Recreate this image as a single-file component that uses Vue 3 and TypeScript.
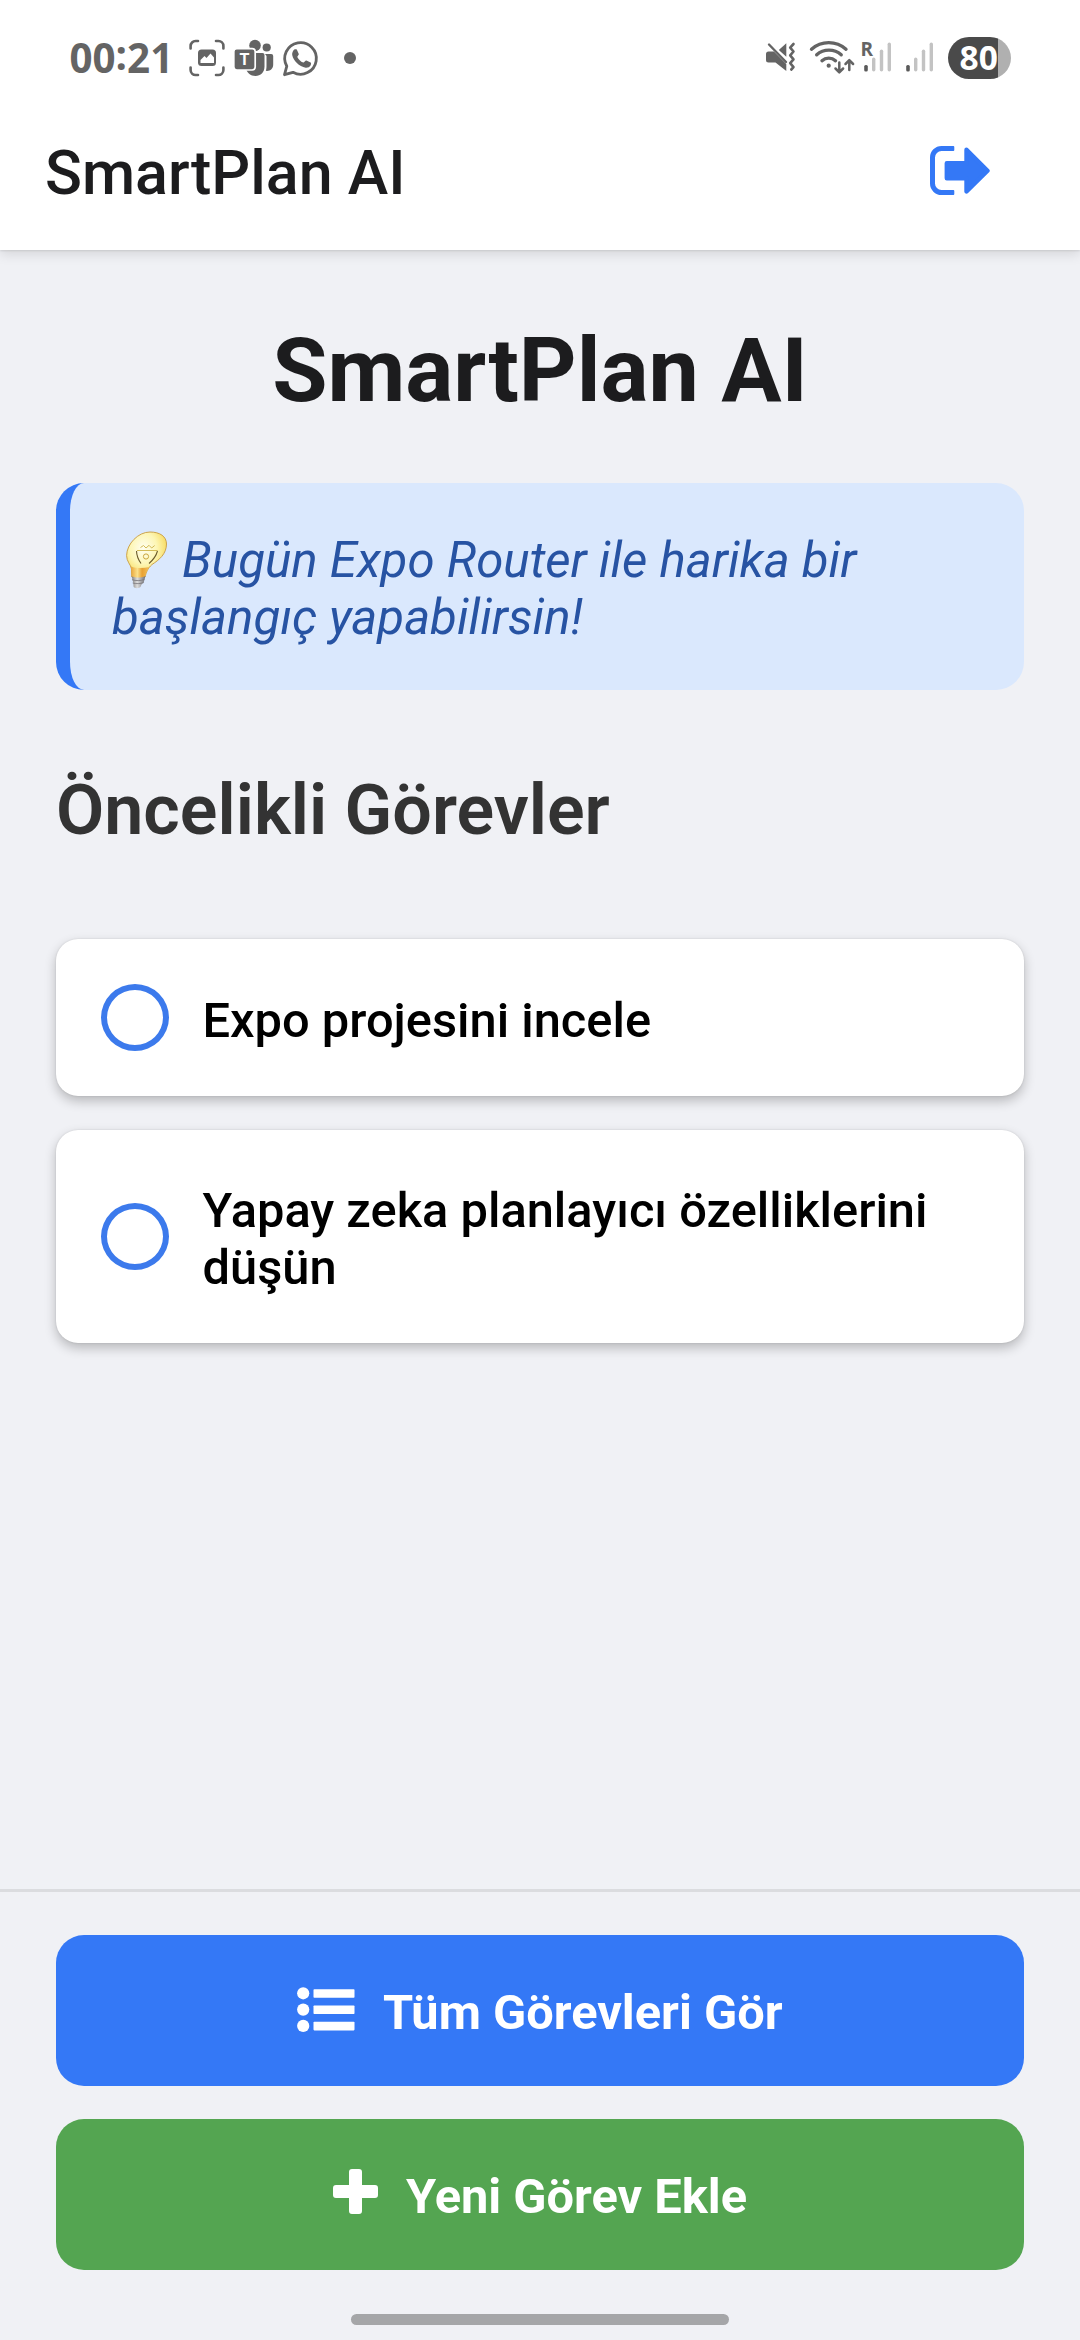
<script setup lang="ts">
import { ref } from 'vue'

interface Task {
  id: number
  title: string
}

const appName = 'SmartPlan AI'
const tasks = ref<Task[]>([
  { id: 1, title: 'Expo projesini incele' },
  { id: 2, title: 'Yapay zeka planlayıcı özelliklerini düşün' },
])
</script>

<template>
  <div class="screen">
    <div class="top">
      <div class="status">
        <span class="clock">00<span class="colon">:</span>21</span>
        <svg class="notif" width="135" height="44" viewBox="0 0 135 44">
          <g fill="none" stroke="#646464" stroke-width="2.6" stroke-linecap="round">
            <path d="M1.6 12.5V10a5 5 0 0 1 5-5H9M27 5h2.400a5 5 0 0 1 5 5v2.500M34.400 31.500V34a5 5 0 0 1-5 5H27M9 39H6.600a5 5 0 0 1-5-5v-2.500" />
          </g>
          <rect x="9" y="13.500" width="18" height="16.500" rx="3.500" fill="#646464" />
          <path d="M11.500 27v-3l4-4 2 2 4-4.500 3.500 4V27z" fill="#fff" />
          <!-- teams -->
          <g fill="#646464">
            <circle cx="66" cy="9.500" r="5.800" />
            <circle cx="77.700" cy="11.500" r="4.100" />
            <path d="M76 18h6.200a2 2 0 0 1 2 2v8.500c0 4-2.700 6.300-6.200 6.500-.8 0-1.200-.2-1.200-.2.700-1.800.700-3.500.700-5.800V20z" />
            <path d="M57 17h16.500a2 2 0 0 1 2 2v11.500c0 5.700-4 9.500-9 9.500s-9-3.500-9.500-8z" />
            <rect x="44.800" y="12.600" width="21.400" height="21.400" rx="3" stroke="#fff" stroke-width="1.700" />
          </g>
          <text x="55.400" y="29.300" text-anchor="middle" class="teams-t">T</text>
          <!-- whatsapp -->
          <path d="M95.500 38.700l2.300-8.500A15.800 15.800 0 1 1 104 36.300z" fill="none" stroke="#646464" stroke-width="2.800" stroke-linejoin="round" />
          <path d="M105.300 13.600c.5-.5 2.100-.7 2.600.1l1.900 4.200c.3.900-1.700 2.400-1.500 3.100 1.200 2.600 3.300 4.500 5.900 5.600.8.300 2.300-2.300 3.200-2l4.200 2c.8.400.5 1.700.1 2.600-.8 1.800-3.300 2.700-5 2.500-6.600-1-12.300-6.800-13.500-12.600-.3-2.200.7-4.200 2.100-5.500z" fill="#646464" />
        </svg>
        <span class="more"></span>
        <svg class="system" width="172" height="44" viewBox="0 0 172 44">
          <!-- muted speaker with vibration -->
          <g fill="#646464">
            <path d="M0 18a2.500 2.500 0 0 1 2.500-2.500H8L20.300 28v7L9.500 26.500h-7A2.500 2.500 0 0 1 0 24z" />
            <path d="M12.800 14l7.500-6.700v13.500z" />
          </g>
          <g fill="none" stroke="#646464" stroke-linecap="round" stroke-linejoin="round">
            <path d="M3 8.500L20 26" stroke-width="2.400" />
            <path d="M27.500 8l-3.300 3.600 3.300 3.900-3.300 3.900 3.300 3.900-3.300 3.900 3.300 3.900-2.200 2.400" stroke-width="2.600" />
            <path d="M45.500 13.200a26 26 0 0 1 34.500 0M50.700 18.800a18.500 18.500 0 0 1 24.500 0M56 24.700a10 10 0 0 1 13.500 0" stroke-width="3.400" />
            <path d="M73.300 26.500v9.500M69.500 32.500l3.800 3.800 3.800-3.800M83.300 34v-9.500M79.500 28l3.800-3.800 3.800 3.800" stroke-width="2.500" />
          </g>
          <circle cx="62.700" cy="29.700" r="2.100" fill="#646464" />
          <!-- signal bars for both SIMs -->
          <text x="94.500" y="19.500" class="roaming">R</text>
          <g fill="#c3c3c3">
            <rect x="106" y="21.500" width="3.400" height="14" rx="1.700" />
            <rect x="113.800" y="13.500" width="3.400" height="22" rx="1.700" />
            <rect x="121.600" y="6.500" width="3.400" height="29" rx="1.700" />
            <rect x="148" y="21.500" width="3.400" height="14" rx="1.700" />
            <rect x="155.800" y="13.500" width="3.400" height="22" rx="1.700" />
            <rect x="163.600" y="6.500" width="3.400" height="29" rx="1.700" />
          </g>
          <rect x="98.200" y="29" width="3.600" height="6.500" rx="1.500" fill="#5a5a5a" />
          <rect x="140.200" y="29" width="3.600" height="6.500" rx="1.500" fill="#5a5a5a" />
        </svg>
        <span class="battery"><span class="level">80</span></span>
      </div>

      <header class="bar">
        <span class="bar-title">{{ appName }}</span>
        <button class="logout" type="button" aria-label="Çıkış">
          <svg width="60" height="49" viewBox="0 0 60 49">
            <path d="M23.300 2.500H11.500a9 9 0 0 0-9 9v26a9 9 0 0 0 9 9h11.800" fill="none" stroke="#3478f6" stroke-width="5" stroke-linecap="butt" />
            <path d="M22.500 0h.8q1 0 1 1v3q0 1-1 1h-.8zM22.500 44h.8q1 0 1 1v3q0 1-1 1h-.8z" fill="#3478f6" />
            <path d="M36.500 3.700L57.500 24.700 36.500 45.500V32.200H16.800V17.300H36.500z" fill="#3478f6" stroke="#3478f6" stroke-width="4.400" stroke-linejoin="round" />
          </svg>
        </button>
      </header>
    </div>

    <main class="body">
      <h1>{{ appName }}</h1>

      <p class="tip">
        <svg class="bulb" width="58" height="58" viewBox="0 0 58 58" role="img" aria-label="💡">
          <defs>
            <radialGradient id="glass" cx=".42" cy=".35" r=".68">
              <stop offset="0" stop-color="#fffef0" />
              <stop offset=".5" stop-color="#fdf6b4" />
              <stop offset=".85" stop-color="#f8de6a" />
              <stop offset="1" stop-color="#e3b63c" />
            </radialGradient>
            <linearGradient id="neck" x1="0" x2="1" y1="0" y2="0">
              <stop offset="0" stop-color="#e9a63a" />
              <stop offset=".35" stop-color="#fbe08a" />
              <stop offset=".6" stop-color="#e8a032" />
              <stop offset="1" stop-color="#f3c45c" />
            </linearGradient>
            <linearGradient id="cap" x1="0" x2="1" y1="0" y2="0">
              <stop offset="0" stop-color="#84827f" />
              <stop offset=".4" stop-color="#dcdcdc" />
              <stop offset="1" stop-color="#6e6e74" />
            </linearGradient>
          </defs>
          <path d="M38 1C26 1 14.800 13 14.600 24.500c-.1 6 4.200 9 4.900 13.500l.3 8c3.500 2.200 9.500 2 13.200 0 1.200-4.500 2.500-8.500 7-12.500C47 29 54.500 23 54.500 13 54.500 5.500 48 1 38 1z" fill="url(#glass)" stroke="#c79b3f" stroke-width=".9" />
          <path d="M19 35.500c5 2 12 2 18.500.5-2.500 3.500-3.600 6.500-4.500 10-3.500 2-9.500 2.200-13.200 0z" fill="url(#neck)" />
          <path d="M19.700 45.200c4 2 9.500 1.800 13.800-.2l-1.800 6.600c-1.500 1.200-2.200 1.400-2.900 4-1.200 2-6 2.300-7.200.2l-.3-3.800z" fill="url(#cap)" />
          <path d="M20 48.700c4 1.300 8.500 1.200 12.500-.3M20.700 52c3.500 1 7.500.8 11-.4" fill="none" stroke="#77757a" stroke-width=".8" />
          <path d="M25 19.500h20.500M28.500 16.500l3-2 2.500 2.500 3-2.700 2.700 2.700 3-2.500" fill="none" stroke="#d3bb57" stroke-width="1" />
          <path d="M24.500 20c.2 6 2 9 4.500 12.500M45.500 20c-1.500 5.500-4.500 9-8.500 12.500" fill="none" stroke="#6b5a2b" stroke-width="1.100" />
          <circle cx="34" cy="25.500" r="2.600" fill="none" stroke="#c9a53f" stroke-width="1" />
        </svg>
        Bugün Expo Router ile harika bir başlangıç yapabilirsin!
      </p>

      <h2>Öncelikli Görevler</h2>

      <ul class="tasks">
        <li v-for="task in tasks" :key="task.id" class="task">
          <span class="check"></span>
          <span class="task-title">{{ task.title }}</span>
        </li>
      </ul>
    </main>

    <footer class="actions">
      <button class="btn primary" type="button">
        <svg class="list-icon" width="57.500" height="45" viewBox="0 0 57.500 45">
          <g fill="#fff">
            <circle cx="6.200" cy="6.300" r="6.100" />
            <circle cx="6.200" cy="22.600" r="6.100" />
            <circle cx="6.200" cy="38.900" r="6.100" />
            <rect x="16.500" y="2.200" width="41" height="8.600" rx=".8" />
            <rect x="16.500" y="18.400" width="41" height="8.600" rx=".8" />
            <rect x="16.500" y="34.800" width="41" height="8.600" rx=".8" />
          </g>
        </svg>
        <span>Tüm Görevleri Gör</span>
      </button>
      <button class="btn success" type="button">
        <svg class="plus-icon" width="45" height="45" viewBox="0 0 45 45">
          <path d="M19 0h7a3 3 0 0 1 3 3v13h13a3 3 0 0 1 3 3v7a3 3 0 0 1-3 3H29v13a3 3 0 0 1-3 3h-7a3 3 0 0 1-3-3V29H3a3 3 0 0 1-3-3v-7a3 3 0 0 1 3-3h13V3a3 3 0 0 1 3-3z" fill="#fff" />
        </svg>
        <span>Yeni Görev Ekle</span>
      </button>
      <div class="home-indicator"></div>
    </footer>
  </div>
</template>

<style>
body {
  background: #f0f1f5;
}
</style>

<style scoped>
.screen {
  width: 1080px;
  height: 2340px;
  display: flex;
  flex-direction: column;
  overflow: hidden;
  background: #f0f1f5;
  font-family: Roboto, "Noto Sans", sans-serif;
}

.top {
  height: 250px;
  flex: none;
  background: #fff;
  box-shadow: 0 1px 2px rgba(0, 0, 0, 0.1), 0 5px 11px rgba(0, 0, 0, 0.1);
}

.status {
  height: 96px;
  box-sizing: border-box;
  padding: 20px 69px 0 69.500px;
  display: flex;
  align-items: center;
}

.clock {
  width: 119px;
  color: #646464;
  font: 700 40.300px/44px "Open Sans", sans-serif;
}

.colon {
  position: relative;
  top: -3.500px;
}

.notif {
  flex: none;
}

.teams-t {
  font: 700 16px Roboto, sans-serif;
  fill: #fff;
}

.more {
  width: 12px;
  height: 12px;
  margin-left: 20px;
  border-radius: 50%;
  background: #646464;
}

.system {
  flex: none;
  margin-left: auto;
  margin-right: 10px;
}

.roaming {
  font: 700 19px "Open Sans", sans-serif;
  fill: #646464;
}

.battery {
  width: 63px;
  height: 42px;
  border-radius: 21px;
  background: linear-gradient(90deg, #4a4a4a 50.500px, #b0b0b0 50.500px);
  color: #fff;
  font: 700 33.500px/41px "Open Sans", sans-serif;
}

.level {
  display: block;
  padding-left: 11.500px;
}

.bar {
  height: 154px;
  padding: 0 90px 0 45px;
  display: flex;
  align-items: center;
  justify-content: space-between;
}

.bar-title {
  color: #1c1c1e;
  font-size: 61px;
  font-weight: 500;
  line-height: 72px;
}

.logout {
  display: flex;
  padding: 0 0 5px;
  border: 0;
  background: none;
}

.body {
  flex: 1;
  padding: 68px 56px 0;
}

h1 {
  margin: 0 0 59px;
  color: #1c1c1e;
  font-size: 89.800px;
  font-weight: 700;
  line-height: 106px;
  text-align: center;
}

.tip {
  height: 207px;
  box-sizing: border-box;
  margin: 0 0 79px;
  padding: 49px 42px 0 42px;
  border-left: 14px solid #3478f6;
  border-radius: 28px;
  background: #dae8fd;
  color: #2753a3;
  font-size: 49.220px;
  font-style: italic;
  line-height: 57px;
}

.bulb {
  margin: -12px 0;
  vertical-align: 0;
}

h2 {
  margin: 0 0 88px;
  color: #333;
  font-size: 70px;
  font-weight: 600;
  line-height: 82px;
}

.tasks {
  margin: 0;
  padding: 0;
  display: flex;
  flex-direction: column;
  gap: 34px;
  list-style: none;
}

.task {
  padding: 45px;
  display: flex;
  align-items: center;
  gap: 33.500px;
  border-radius: 22px;
  background: #fff;
  box-shadow: 0 0 2px rgba(0, 0, 0, 0.12), 0 5px 12px rgba(0, 0, 0, 0.24);
}

.check {
  flex: none;
  width: 68px;
  height: 67px;
  box-sizing: border-box;
  border: 6px solid #3c7aec;
  border-radius: 50%;
}

.task-title {
  padding: 7px 0 2px;
  color: #000;
  font-size: 48.800px;
  font-weight: 500;
  line-height: 57px;
}

.actions {
  height: 451px;
  box-sizing: border-box;
  padding: 43px 56px 0;
  border-top: 3px solid #dbdcdf;
  display: flex;
  flex-direction: column;
}

.btn {
  height: 151px;
  flex: none;
  margin-bottom: 33px;
  padding: 0;
  display: flex;
  align-items: center;
  justify-content: center;
  gap: 28px;
  border: 0;
  border-radius: 28px;
  color: #fff;
  font: 700 48.750px/58px Roboto, sans-serif;
}

.btn span {
  padding-top: 5px;
}

.primary {
  background: #3478f6;
}

.success {
  background: #54a551;
}

.list-icon {
  margin-bottom: 2px;
}

.plus-icon {
  margin-bottom: 6px;
}

.home-indicator {
  width: 378px;
  height: 11px;
  margin: 11px auto 0;
  border-radius: 6px;
  background: #a5a6a8;
}
</style>
